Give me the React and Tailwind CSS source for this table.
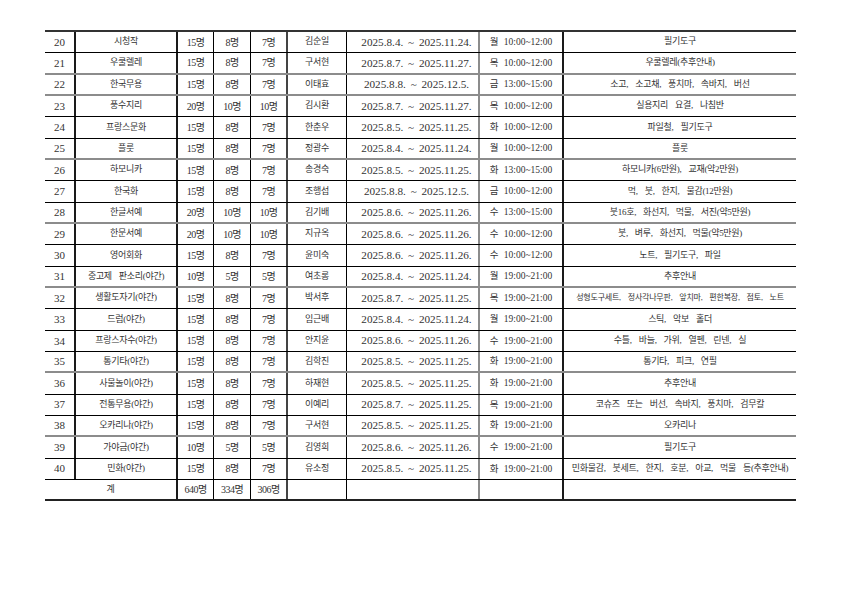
import React from "react";

const rows = [
  ["20", "시청작", "15명", "8명", "7명", "김순일", "2025.8.4. ~ 2025.11.24.", "월 10:00~12:00", "필기도구"],
  ["21", "우쿨렐레", "15명", "8명", "7명", "구서현", "2025.8.7. ~ 2025.11.27.", "목 10:00~12:00", "우쿨렐레(추후안내)"],
  ["22", "한국무용", "15명", "8명", "7명", "이태효", "2025.8.8. ~ 2025.12.5.", "금 13:00~15:00", "소고, 소고채, 풍치마, 속바지, 버선"],
  ["23", "풍수지리", "20명", "10명", "10명", "김시환", "2025.8.7. ~ 2025.11.27.", "목 10:00~12:00", "실용지리 요결, 나침반"],
  ["24", "프랑스문화", "15명", "8명", "7명", "한춘우", "2025.8.5. ~ 2025.11.25.", "화 10:00~12:00", "파일철, 필기도구"],
  ["25", "플룻", "15명", "8명", "7명", "정광수", "2025.8.4. ~ 2025.11.24.", "월 10:00~12:00", "플룻"],
  ["26", "하모니카", "15명", "8명", "7명", "송경숙", "2025.8.5. ~ 2025.11.25.", "화 13:00~15:00", "하모니카(6만원), 교재(약2만원)"],
  ["27", "한국화", "15명", "8명", "7명", "조행섭", "2025.8.8. ~ 2025.12.5.", "금 10:00~12:00", "먹, 붓, 한지, 물감(12만원)"],
  ["28", "한글서예", "20명", "10명", "10명", "김기배", "2025.8.6. ~ 2025.11.26.", "수 13:00~15:00", "붓16호, 화선지, 먹물, 서진(약5만원)"],
  ["29", "한문서예", "20명", "10명", "10명", "지규옥", "2025.8.6. ~ 2025.11.26.", "수 10:00~12:00", "붓, 벼루, 화선지, 먹물(약5만원)"],
  ["30", "영어회화", "15명", "8명", "7명", "윤미숙", "2025.8.6. ~ 2025.11.26.", "수 10:00~12:00", "노트, 필기도구, 파일"],
  ["31", "중고제 판소리(야간)", "10명", "5명", "5명", "여초롱", "2025.8.4. ~ 2025.11.24.", "월 19:00~21:00", "추후안내"],
  ["32", "생활도자기(야간)", "15명", "8명", "7명", "박서후", "2025.8.7. ~ 2025.11.25.", "목 19:00~21:00", "성형도구세트, 정사각나무판, 앞치마, 편한복장, 점토, 노트"],
  ["33", "드럼(야간)", "15명", "8명", "7명", "임근배", "2025.8.4. ~ 2025.11.24.", "월 19:00~21:00", "스틱, 악보 홀더"],
  ["34", "프랑스자수(야간)", "15명", "8명", "7명", "안지윤", "2025.8.6. ~ 2025.11.26.", "수 19:00~21:00", "수틀, 바늘, 가위, 열펜, 린넨, 실"],
  ["35", "통기타(야간)", "15명", "8명", "7명", "김학진", "2025.8.5. ~ 2025.11.25.", "화 19:00~21:00", "통기타, 피크, 연필"],
  ["36", "사물놀이(야간)", "15명", "8명", "7명", "하재현", "2025.8.5. ~ 2025.11.25.", "화 19:00~21:00", "추후안내"],
  ["37", "전통무용(야간)", "15명", "8명", "7명", "이예리", "2025.8.7. ~ 2025.11.25.", "목 19:00~21:00", "코슈즈 또는 버선, 속바지, 풍치마, 검무칼"],
  ["38", "오카리나(야간)", "15명", "8명", "7명", "구서현", "2025.8.5. ~ 2025.11.25.", "화 19:00~21:00", "오카리나"],
  ["39", "가야금(야간)", "10명", "5명", "5명", "김영희", "2025.8.6. ~ 2025.11.26.", "수 19:00~21:00", "필기도구"],
  ["40", "민화(야간)", "15명", "8명", "7명", "유소정", "2025.8.5. ~ 2025.11.25.", "화 19:00~21:00", "민화물감, 붓세트, 한지, 호분, 아교, 먹물 등(추후안내)"],
];

const grayAfter = ["21", "22", "25", "28", "31", "35", "38"];

const base = "flex items-center justify-center whitespace-nowrap overflow-hidden";
const ko = "font-['Liberation_Serif','Noto_Sans_CJK_KR',serif] text-[9px] tracking-[-0.3px] [word-spacing:5px] text-[#333]";
const num = "font-['Liberation_Serif','Noto_Sans_CJK_KR',serif] text-[10px] tracking-[-0.5px] text-[#333]";

function Row({ r }) {
  const gray = grayAfter.includes(r[0]);
  const rowCls = gray
    ? "grid grid-cols-[31px_102px_36px_37px_37px_59px_133px_84px_232px] h-[21.33px] border-b-2 border-[#8c8c8c]"
    : "grid grid-cols-[31px_102px_36px_37px_37px_59px_133px_84px_232px] h-[21.33px] border-b border-black";
  const small = r[0] === "32";
  return (
    <div className={rowCls}>
      <div className={`${base} border-r-2 border-[#1a1a1a] font-['Liberation_Serif',serif] text-[11px] text-[#333]`}>{r[0]}</div>
      <div className={`${base} border-r-2 border-[#1a1a1a] ${ko}`}>{r[1]}</div>
      <div className={`${base} border-r border-black ${num}`}>{r[2]}</div>
      <div className={`${base} border-r border-black ${num}`}>{r[3]}</div>
      <div className={`${base} border-r-2 border-[#444] ${num}`}>{r[4]}</div>
      <div className={`${base} border-r border-black ${ko}`}>{r[5]}</div>
      <div className={`${base} border-r-2 border-[#8c8c8c] font-['Liberation_Serif',serif] text-[11.2px] [word-spacing:2px] text-[#333] pl-[8px]`}>{r[6]}</div>
      <div className={`${base} border-r-2 border-[#1a1a1a] font-['Liberation_Serif','Noto_Sans_CJK_KR',serif] text-[9.5px] [word-spacing:3px] text-[#333]`}>{r[7]}</div>
      <div className={small
        ? `${base} font-['Liberation_Serif','Noto_Sans_CJK_KR',serif] text-[8px] tracking-[-0.2px] [word-spacing:5px] text-[#333]`
        : `${base} ${ko}`}>{r[8]}</div>
    </div>
  );
}

export default function App() {
  return (
    <div className="w-[841px] h-[595px] bg-white overflow-hidden">
      <div className="pt-[30px] pl-[45px]">
        <div className="w-[751px] border-t-2 border-[#333]">
          {rows.map((r) => (
            <Row key={r[0]} r={r} />
          ))}
          <div className="grid grid-cols-[133px_36px_37px_37px_59px_133px_84px_232px] h-[21.33px] border-b-2 border-[#222]">
            <div className={`${base} border-r-2 border-[#1a1a1a] ${ko}`}>계</div>
            <div className={`${base} border-r border-black ${num}`}>640명</div>
            <div className={`${base} border-r border-black ${num}`}>334명</div>
            <div className={`${base} border-r-2 border-[#444] ${num}`}>306명</div>
            <div className={`${base} border-r border-black`}></div>
            <div className={`${base} border-r-2 border-[#8c8c8c]`}></div>
            <div className={`${base} border-r-2 border-[#1a1a1a]`}></div>
            <div className={base}></div>
          </div>
        </div>
      </div>
    </div>
  );
}
